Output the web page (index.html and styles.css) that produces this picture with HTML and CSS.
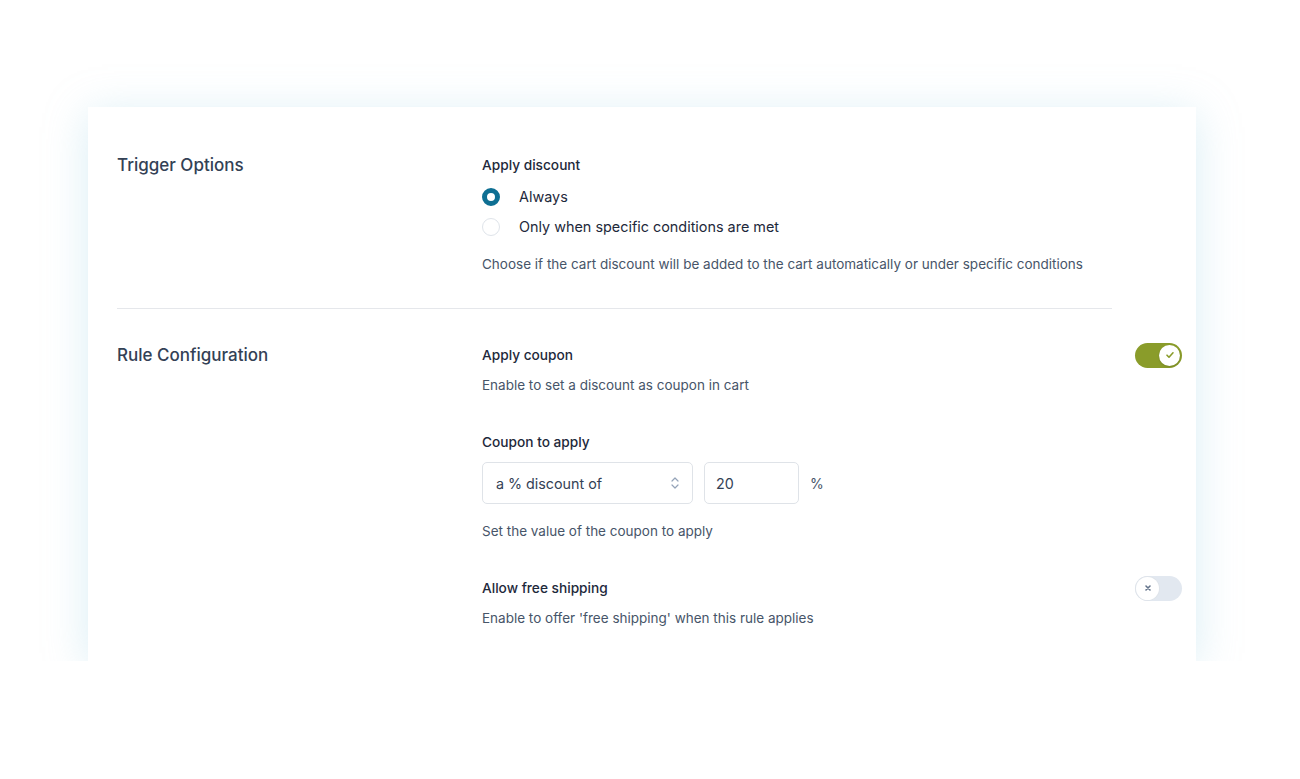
FILE: index.html
```html
<!DOCTYPE html>
<html lang="en">
<head>
    <meta charset="UTF-8">
    <title>Cart Discount - Rule Settings</title>
    <link rel="stylesheet" href="styles.css">
</head>
<body>
    <div class="card">
        <!-- Trigger options -->
        <div class="section first">
            <h2 class="section-title">Trigger Options</h2>
            <div class="section-body">
                <div class="field-label">Apply discount</div>
                <div class="radio-list">
                    <label class="radio-row">
                        <span class="radio checked"></span>
                        <span>Always</span>
                    </label>
                    <label class="radio-row">
                        <span class="radio"></span>
                        <span>Only when specific conditions are met</span>
                    </label>
                </div>
                <p class="help radio-help">Choose if the cart discount will be added to the cart automatically or under specific conditions</p>
            </div>
        </div>

        <div class="divider"></div>

        <!-- Rule configuration -->
        <div class="section second">
            <h2 class="section-title">Rule Configuration</h2>
            <div class="section-body">
                <div class="field-head">
                    <div class="field-label">Apply coupon</div>
                    <span class="toggle on">
                        <span class="knob">
                            <svg width="10" height="10" viewBox="0 0 10 10"><path d="M2 5.2l2 2 4-4.4" fill="none" stroke="#8a9c2a" stroke-width="1.6" stroke-linecap="round" stroke-linejoin="round"/></svg>
                        </span>
                    </span>
                </div>
                <p class="help">Enable to set a discount as coupon in cart</p>

                <div class="field-label spaced">Coupon to apply</div>
                <div class="coupon-row">
                    <div class="select">
                        <span>a % discount of</span>
                        <svg width="10" height="14" viewBox="0 0 10 14"><path d="M2 5l3-3 3 3M2 9l3 3 3-3" fill="none" stroke="#94a3b8" stroke-width="1.2" stroke-linecap="round" stroke-linejoin="round"/></svg>
                    </div>
                    <div class="number-input">20</div>
                    <span class="unit">%</span>
                </div>
                <p class="help coupon-help">Set the value of the coupon to apply</p>

                <div class="field-head spaced">
                    <div class="field-label">Allow free shipping</div>
                    <span class="toggle">
                        <span class="knob">
                            <svg width="10" height="10" viewBox="0 0 10 10"><path d="M3 3l4 4M7 3l-4 4" fill="none" stroke="#64748b" stroke-width="1.6" stroke-linecap="round"/></svg>
                        </span>
                    </span>
                </div>
                <p class="help">Enable to offer 'free shipping' when this rule applies</p>
            </div>
        </div>
    </div>
</body>
</html>
```

FILE: styles.css
```css
/* General */
body {
    margin: 0;
    padding: 107px 0 0 88px;
    background-color: #ffffff;
    font-family: Inter, "Noto Sans", sans-serif;
    color: #1e293b;
}

.card {
    width: 1108px;
    box-sizing: border-box;
    background-color: #ffffff;
    padding: 0 14px 33px 29px;
    box-shadow: 0 6px 40px rgba(150, 205, 225, 0.35);
}

.section {
    display: flex;
}

.section.first {
    padding: 48px 0 34px;
}

.section.second {
    padding-top: 36px;
}

.section-title {
    width: 365px;
    flex-shrink: 0;
    margin: 0;
    font-size: 17px;
    line-height: 20px;
    font-weight: 500;
    color: #334155;
}

.section-body {
    flex: 1;
}

.divider {
    height: 1px;
    background-color: #e5e7eb;
    margin-right: 70px;
}

/* Fields */
.field-label {
    font-size: 13.7px;
    line-height: 20px;
    font-weight: 500;
    color: #1e293b;
}

.field-label.spaced,
.field-head.spaced {
    margin-top: 37px;
}

.field-head {
    display: flex;
    justify-content: space-between;
    align-items: center;
    height: 20px;
}

.help {
    margin: 10px 0 0;
    font-size: 13.5px;
    line-height: 20px;
    color: #475569;
}

.radio-help,
.coupon-help {
    margin-top: 17px;
}

/* Radios */
.radio-list {
    margin-top: 12px;
    display: flex;
    flex-direction: column;
    gap: 10px;
}

.radio-row {
    display: flex;
    align-items: center;
    gap: 19px;
    font-size: 14.4px;
    line-height: 20px;
    color: #1e293b;
}

.radio {
    width: 18px;
    height: 18px;
    box-sizing: border-box;
    border-radius: 50%;
    border: 1px solid #dfe4ea;
    background-color: #ffffff;
}

.radio.checked {
    border: 5px solid #0e6f93;
}

/* Toggles */
.toggle {
    width: 47px;
    height: 25px;
    box-sizing: border-box;
    border-radius: 13px;
    background-color: #e2e8f0;
    display: flex;
    align-items: center;
    padding: 2px;
}

.toggle.on {
    background-color: #8a9c2a;
    justify-content: flex-end;
}

.knob {
    width: 21px;
    height: 21px;
    border-radius: 50%;
    background-color: #ffffff;
    display: flex;
    align-items: center;
    justify-content: center;
    box-shadow: 0 1px 2px rgba(0, 0, 0, 0.15);
}

.toggle:not(.on) .knob {
    margin-left: -1px;
    width: 23px;
    height: 23px;
    box-shadow: 0 0 0 1px #dfe4ea;
}

/* Coupon */
.coupon-row {
    margin-top: 10px;
    display: flex;
    align-items: center;
}

.select,
.number-input {
    height: 42px;
    box-sizing: border-box;
    border: 1px solid #dfe3e8;
    border-radius: 5px;
    font-size: 14.3px;
    color: #334155;
    display: flex;
    align-items: center;
}

.select {
    width: 211px;
    padding: 0 12px 0 13px;
    justify-content: space-between;
}

.number-input {
    width: 95px;
    margin-left: 11px;
    padding-left: 11px;
}

.unit {
    margin-left: 11px;
    font-size: 14px;
    color: #475569;
}
```
